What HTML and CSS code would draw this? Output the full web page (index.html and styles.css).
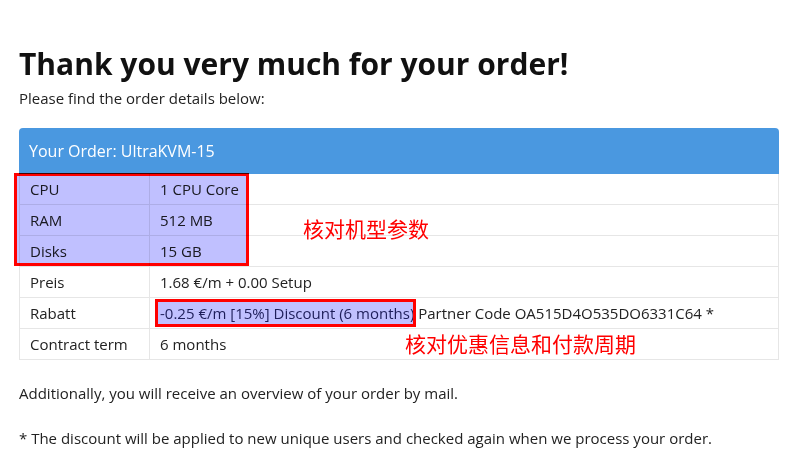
FILE: index.html
```html
<!DOCTYPE html>
<html lang="en">
<head>
  <meta charset="UTF-8" />
  <meta name="viewport" content="width=device-width, initial-scale=1.0"/>
  <title>Order confirmation</title>
  <link rel="stylesheet" href="styles.css">
</head>
<body>

  <div class="page">
    <h1>Thank you very much for your order!</h1>
    <p class="lead">Please find the order details below:</p>

    <div class="panel">
      <div class="panel-heading">Your Order: UltraKVM-15</div>
      <div class="panel-body">
        <table class="order">
          <tr><td class="key">CPU</td><td>1 CPU Core</td></tr>
          <tr><td class="key">RAM</td><td>512 MB</td></tr>
          <tr><td class="key">Disks</td><td>15 GB</td></tr>
          <tr><td class="key">Preis</td><td>1.68 €/m + 0.00 Setup</td></tr>
          <tr>
            <td class="key">Rabatt</td>
            <td><span class="mark">-0.25 €/m [15%] Discount (6 months)</span> Partner Code OA515D4O535DO6331C64 *</td>
          </tr>
          <tr><td class="key">Contract term</td><td>6 months</td></tr>
        </table>

        <!-- annotations drawn on top of the screenshot -->
        <div class="mark-box"></div>
        <div class="note note-spec">核对机型参数</div>
        <div class="note note-discount">核对优惠信息和付款周期</div>
      </div>
    </div>

    <p class="info">Additionally, you will receive an overview of your order by mail.</p>
    <p class="info info-last">* The discount will be applied to new unique users and checked again when we process your order.</p>
  </div>

</body>
</html>
```

FILE: styles.css
```css
body {
  margin: 0;
  font-family: 'Open Sans', 'Noto Sans', sans-serif;
  font-size: 15px;
  color: #222;
  background: #fff;
}

.page {
  padding: 40px 19px 0;
}

h1 {
  margin: 0;
  font-size: 30px;
  line-height: 48px;
  font-weight: bold;
  color: #111;
}

.lead {
  margin: 0 0 20px;
  line-height: 20px;
}

.panel {
  width: 760px;
}

.panel-heading {
  background: #4a98e0;
  color: #fff;
  font-size: 16px;
  line-height: 22px;
  padding: 12px 10px;
  border-radius: 4px 4px 0 0;
}

.panel-body {
  position: relative;
}

.order {
  width: 100%;
  border-collapse: collapse;
}

.order td {
  border: 1px solid #e6e6e6;
  padding: 6px 10px;
  line-height: 18px;
  white-space: nowrap;
}

.order tr:first-child td {
  border-top: 0;
}

.order td.key {
  width: 109px;
}

.mark {
  background: #c0c0ff;
  color: #1e1e5a;
  outline: 3px solid #f00;
  outline-offset: -1px;
  margin-left: -3px;
  padding: 2px 0 2px 3px;
}

.mark-box {
  position: absolute;
  left: -5px;
  top: -1px;
  width: 229px;
  height: 87px;
  border: 3px solid #f00;
  background: #c0c0ff;
  mix-blend-mode: multiply;
}

.note {
  position: absolute;
  font-family: 'Noto Sans CJK SC', sans-serif;
  font-size: 21px;
  line-height: 28px;
  color: #f00;
}

.note-spec {
  left: 284px;
  top: 40px;
}

.note-discount {
  left: 386px;
  top: 155px;
}

.info {
  margin: 23px 0 0;
  line-height: 20px;
}

.info-last {
  margin-top: 25px;
}
```
